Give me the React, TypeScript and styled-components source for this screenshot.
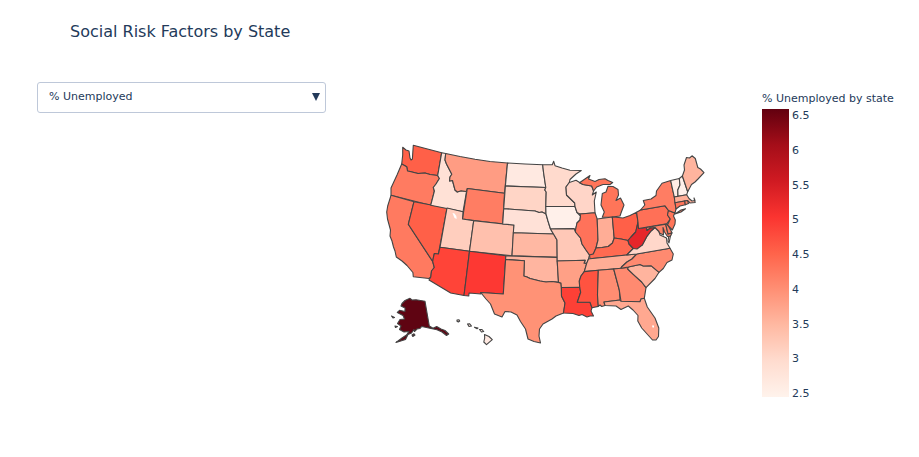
import React, { useState } from "react";
import styled, { createGlobalStyle } from "styled-components";

const GlobalStyle = createGlobalStyle`
  * { box-sizing: border-box; }
  body {
    margin: 0;
    background: #ffffff;
    color: #233a5a;
    font-family: Verdana, "DejaVu Sans", sans-serif;
  }
`;

const Page = styled.main`
  padding: 20px 26px 40px 37px;
`;

const Title = styled.h1`
  margin: 0 33px 38px;
  font-size: 16px;
  line-height: 24px;
  font-weight: 400;
`;

const Content = styled.div`
  display: grid;
  grid-template-columns: 289px minmax(0, 1fr) 131px;
  align-items: start;
`;

const Picker = styled.label`
  display: grid;
  align-items: center;
  height: 31px;
`;

const Select = styled.select`
  grid-area: 1 / 1;
  width: 100%;
  height: 31px;
  padding: 0 28px 2px 11px;
  appearance: none;
  border: 1px solid #bec8d9;
  border-radius: 3px;
  background: #ffffff;
  color: #233a5a;
  font: inherit;
  font-size: 11px;
`;

const Arrow = styled.svg`
  grid-area: 1 / 1;
  justify-self: end;
  width: 8px;
  height: 8px;
  margin: 0 6px 2px 0;
  pointer-events: none;
  fill: #233a5a;
`;

const MapArea = styled.div`
  display: flex;
  justify-content: center;
  padding-top: 58px;
`;

const MapSvg = styled.svg`
  width: 100%;
  max-width: 330px;
  height: auto;
  stroke: #444444;
  stroke-width: 1.1;
  stroke-linejoin: round;
`;

const Legend = styled.section`
  padding-top: 8px;
`;

const LegendTitle = styled.h2`
  margin: 0;
  font-size: 11px;
  line-height: 18px;
  font-weight: 400;
  white-space: nowrap;
`;

const Scale = styled.div`
  display: flex;
  align-items: start;
  gap: 3px;
  padding-top: 1px;
`;

const Bar = styled.div`
  width: 27px;
  height: 288px;
  background: linear-gradient(
    to top,
    #fff3ec, #ffdccf, #ffb9a2, #ff8f74, #ff634a, #fb3430, #d01a22, #a50e19, #62000f
  );
`;

const Ticks = styled.ol`
  display: flex;
  flex-direction: column;
  justify-content: space-between;
  height: 292px;
  margin: 0;
  padding: 0;
  list-style: none;
  font-size: 11px;
  line-height: 14px;
`;

type Shape = { id: string; fill: string; d: string };

const STATES: Shape[] = [
  { id: "WA", fill: "#ff6048", d: "M402.7 147.3L406 150 409 151 410 158 411 160 412.4 159 412.7 154 413.3 145.3 441.7 152.7 437.7 175.5 430 174.5 425 173 418 173.5 410 171.5 407.5 171 406.7 166.7 401.7 164 402.7 155Z" },
  { id: "OR", fill: "#ff7b61", d: "M401.7 164L406.7 166.7 407.5 171 410 171.5 418 173.5 425 173 430 174.5 437.7 175.5 439.4 178.5 436 184 433.3 187.5 434.4 191 430.7 205.3 391 195.3 391 188 397 175Z" },
  { id: "CA", fill: "#ff7a60", d: "M391 195.3L414 201.7 408.3 224.3 432.7 261.5 434.3 267.5 431.5 271 430.8 277 429 278.5 413.3 276.7 412.9 272.5 407 265.5 402 261 396.3 257 395 251 393.5 247 392 241 390 236 390.5 230 387.5 219 386.7 212 387.7 206Z" },
  { id: "NV", fill: "#ff6048", d: "M414 201.7L447 208 438.4 254 434.4 253.5 433.5 257 432.7 261.5 408.3 224.3Z" },
  { id: "ID", fill: "#ffe1d6", d: "M441.7 152.7L445.7 153.5 445 160 446.5 164 451.8 174.3 450 177 449.5 181 452.5 180.5 455 190 457.3 192 461 190.8 466.5 191.5 463 211.8 430.7 205.3 434.4 191 433.3 187.5 436 184 439.4 178.5 437.7 175.5Z" },
  { id: "MT", fill: "#ff9c83", d: "M445.7 153.5L460 156.5 475 159.3 490 161.5 507.5 163 504.5 193.2 467.3 188.5 466.5 191.5 461 190.8 457.3 192 455 190 452.5 180.5 449.5 181 450 177 451.8 174.3 446.5 164 445 160Z" },
  { id: "WY", fill: "#ff7d63", d: "M467.3 188.5L504.5 193.2 502.7 224 462.5 219Z" },
  { id: "UT", fill: "#ffcebe", d: "M447 208L463 211.8 462.5 219 473.7 220.7 469.5 251.3 440 247.3Z" },
  { id: "CO", fill: "#ffc0ad", d: "M473.7 220.7L514 225 512 255.8 469.5 251.3Z" },
  { id: "AZ", fill: "#ff4438", d: "M440 247.3L469.5 251.3 464 295.5 450.7 293 429 280 430.8 277 431.5 271 434.3 267.5 432.7 261.5 433.5 257 434.4 253.5 438.4 254Z" },
  { id: "NM", fill: "#fd3833", d: "M469.5 251.3L505.8 255.8 503.3 294 480.7 292.5 481 294 469 293 468.8 296 464 295.5Z" },
  { id: "ND", fill: "#ffe9e1", d: "M507.5 163L525 164 542.7 164.7 543.5 172 545.8 187.5 505.4 186Z" },
  { id: "SD", fill: "#ffd5c6", d: "M505.4 186L545.8 187.5 544.8 190 546.2 192 545.8 206.5 546 214 542 212 539 212.5 535 211 503.7 208.7Z" },
  { id: "NE", fill: "#ffe1d7", d: "M503.7 208.7L535 211 539 212.5 542 212 546 214 548 221 550.5 229 553.5 234 513.3 232.8 514 225 502.7 224Z" },
  { id: "KS", fill: "#ffb8a3", d: "M513.3 232.8L553.5 234 555 236.5 557 240 557.2 257.4 512 255.8Z" },
  { id: "OK", fill: "#ffb5a0", d: "M505.8 255.8L557.2 257.4 557.2 261 558.5 282.4 552 281.5 546 282 540 281 536 280 530 278.5 527 277 523.8 276 524.4 260.8 505.6 259.5Z" },
  { id: "TX", fill: "#ff9276", d: "M505.6 259.5L524.4 260.8 523.8 276 527 277 530 278.5 536 280 540 281 546 282 552 281.5 558.5 282.4 561 283 561.4 287.5 561.5 296 565 303 563.5 313 556 316 552 319 543 324 539.5 329 539 336 540.5 343 534 341.5 528 339 525.5 329 520.5 321.5 517 315 511 312 505 311.5 502 317 494.5 314 490.5 304 486 299 480.7 292.5 503.3 294Z" },
  { id: "MN", fill: "#ffdacd", d: "M542.7 164.7L552.3 164.8 553.7 161.3 555 165.7 562 168 570 170.3 581.3 170.5 576 174 570 179.5 569.3 182.5 566 187 566.5 195 574.7 203 575 206.5 545.8 206.5 546.2 192 544.8 190 545.8 187.5 543.5 172Z" },
  { id: "IA", fill: "#fff0ea", d: "M545.8 206.5L575 206.5 577 212.5 580.5 216 580 220 577 223 575.5 230 574 228.6 550.5 229 548 221 546 214Z" },
  { id: "MO", fill: "#ffc8b7", d: "M550.5 229L574 228.6 575.5 232 580.5 238 582 244 586 250 589.5 255 588.5 259 586.7 263.4 584 263.2 585.2 260.3 557.2 261 557 240 555 236.5 553.5 234Z" },
  { id: "AR", fill: "#ffa086", d: "M557.2 261L585.2 260.3 584 263.2 586.7 263.4 584.3 271.6 581 276 579.3 281 579.7 287.2 561.4 287.5 561 283 558.5 282.4Z" },
  { id: "LA", fill: "#fd4036", d: "M561.4 287.5L579.7 287.2 580.7 292.3 577.3 302.3 590 302.2 592 307.7 591 311 593.5 316 590 316 587 317 582 314.5 579 315.5 573 313.5 563.5 313 565 303 561.5 296Z" },
  { id: "WI", fill: "#ffd5c8", d: "M569.3 182.5L576 180.3 580 182.7 583 184.5 591.7 186 593.6 191 592.3 195 596.3 192 594.3 201 595 212.7 580 214 577 212.5 575 206.5 574.7 203 566.5 195 566 187Z" },
  { id: "IL", fill: "#ff725a", d: "M580 214L595 212.7 597.2 219 598 240 596 248 593.3 254 589.5 255 586 250 582 244 580.5 238 575.5 232 575.5 230 577 223 580 220 580.5 216Z" },
  { id: "MIU", fill: "#ff7559", d: "M579.5 182.7L590 175.5 588.5 179 595 181.5 599 179.5 605 178.8 608 180.5 612.7 182.5 610 184.5 603 184.5 596.7 187 593.6 191 591.7 186 583 184.5Z" },
  { id: "MI", fill: "#ff7559", d: "M602.3 217.3L604.3 212 601 205 602.3 193.5 606 192 608 186.3 613 186.5 618 189.5 618.5 195 616 200.5 620.5 198 624 205 621 213 620 216 612.3 217Z" },
  { id: "IN", fill: "#ffad96", d: "M597.2 219L612.3 217 614.2 238 612.5 243 608.3 246.5 602 247.5 596 248 598 240Z" },
  { id: "OH", fill: "#ff6048", d: "M612.3 217L618.5 217.5 623 218 630 215.5 636.6 212.3 638 222 635.7 232 631 237 628 240.5 621 239 614.2 238Z" },
  { id: "KY", fill: "#ff6a51", d: "M614.2 238L621 239 628 240.5 629 244 633.3 248.5 626.7 255 590 258.8 589.5 255 593.3 254 596 248 602 247.5 608.3 246.5 612.5 243Z" },
  { id: "TN", fill: "#ffad96", d: "M590 258.8L626.7 255 636.7 254 632 259 627 262 621.5 267 621 268.3 584.3 271.6 586.7 263.4 588.5 259Z" },
  { id: "MS", fill: "#ff5340", d: "M584.3 271.6L598.3 270.3 597.5 295 598.3 306.4 592 307.7 590 302.2 577.3 302.3 580.7 292.3 579.7 287.2 579.3 281 581 276Z" },
  { id: "AL", fill: "#ff8d72", d: "M598.3 270.3L613.7 269 619.3 290 620 300 604 302 605 305.5 601.7 306.5 600 305 598.3 306.4 597.5 295Z" },
  { id: "GA", fill: "#ff8a70", d: "M613.7 269L628 267.5 627.7 269 633.3 274.3 641.7 282 646 287.7 644.3 298.3 641 299 640 301.7 621 301.3 619.3 290Z" },
  { id: "FL", fill: "#ffa890", d: "M604 302L620 300 621 301.3 640 301.7 641 299 644.3 298.3 647.3 307 655 318 658.8 328 658.5 336.5 656 340 652.5 340 648 335 641.7 328 637.8 321 638 315.5 633 310 628.3 306 621 309.5 616 306 605 305.5Z" },
  { id: "SC", fill: "#ffb49e", d: "M627.7 269L628.3 267 640 264.5 643.3 266 651 265.7 659 272.3 655 278.5 646 287.7 641.7 282 633.3 274.3Z" },
  { id: "NC", fill: "#ff8a70", d: "M636.7 254L670 248.3 673.3 254 672 260 667 262.5 663.3 268.5 659 272.3 651 265.7 643.3 266 640 264.5 628.3 267 621 268.3 621.5 267 627 262 632 259Z" },
  { id: "VA", fill: "#ffd7ca", d: "M626.7 255L633.3 248.5 642.3 245 646.7 236.7 651 231 655 227.5 659 231.5 660 235 666.5 238 667 243 670 248.3 636.7 254Z" },
  { id: "VAE", fill: "#ffd7ca", d: "M670.7 235L669 243 668 241 668.7 236.5Z" },
  { id: "WV", fill: "#e6252a", d: "M638 222L638.5 228.5 646.5 227.5 647 230.5 650 228 655 227.5 651 231 646.7 236.7 642.3 245 637 249 633.3 248.5 629 244 628 240.5 631 237 635.7 232Z" },
  { id: "PA", fill: "#ff7057", d: "M636.6 212.3L640.5 210 665 205.8 668.5 210.5 667.5 215 670.3 219 666.7 223.8 638.5 228.5 638 222Z" },
  { id: "MD", fill: "#ff8267", d: "M646.5 227.5L665.7 224.2 668 234 672 233 670.5 236 667.5 236.5 664.5 232 663 227.5 663.5 235 659.5 233 659 231.5 655 227.5 650 228 647 230.5Z" },
  { id: "DE", fill: "#ff7d63", d: "M665.7 224.2L667.5 224 672 232.8 668 234Z" },
  { id: "NJ", fill: "#ff7559", d: "M668.5 210.5L674.8 213 673.5 216 675.3 220 675 224 672.3 230 667.5 225 670.3 219 667.5 215Z" },
  { id: "NY", fill: "#ff7d63", d: "M640.5 210L644.8 205 643.3 200.5 651 199 656 195.5 656.5 191 662 183.3 670.7 180.5 672.5 189 674.3 197 676 209 675 213 668.5 210.5 665 205.8Z" },
  { id: "NYL", fill: "#ff7d63", d: "M675 214L681 210 685.5 208.7 681 212Z" },
  { id: "VT", fill: "#ffece5", d: "M670.7 180.5L679.3 178.5 680 185 677.8 190 678 196.3 674.3 197 672.5 189Z" },
  { id: "NH", fill: "#fff0eb", d: "M679.3 178.5L682.4 176 687.7 191.7 686.7 194.7 678 196.3 677.8 190 680 185Z" },
  { id: "ME", fill: "#ffb49e", d: "M682.4 176L684.5 170 684 165 686.5 157.5 689.5 158 692 155.8 695.3 158.5 697.8 167.5 700.5 169 704 172.7 698 179 695 182 691.5 184.5 687.7 191.7Z" },
  { id: "MA", fill: "#ffae98", d: "M674.3 197L686.7 194.7 689 198.5 692 201 695 200.5 694 198 695.2 202.5 690 203 687.5 200.5 675 202.7Z" },
  { id: "CT", fill: "#ff745a", d: "M675 202.7L684.8 201 685.3 204.7 680 206 676 209Z" },
  { id: "RI", fill: "#ff8267", d: "M684.8 201L687.5 200.5 688.5 203.5 685.3 204.7Z" },
  { id: "AK", fill: "#5f0412", d: "M402 303.5L405 300.5 410 298.3 412 300 416 299.7 425 301.3 429.3 326 433 328.3 436.7 326.5 441 329 445 330.5 448.7 334 446.5 335.5 442 332 437 329.7 431 328.5 421.7 326.5 420 328.5 417 329 414.5 331.5 414 329.5 411.5 333 408 334.5 405.5 339.5 396 342.5 402 338 406.5 335 409 331.5 404 332 399.5 329.5 401 326 397.5 323.5 400 319.5 404.5 319 403 315.5 397.3 312.5 399.5 310.3 405 311.5 405 308 401 306Z" },
  { id: "AKK", fill: "#5f0412", d: "M412 335L414 333.8 415 335 412.8 336.5Z" },
  { id: "AKS", fill: "#5f0412", d: "M391.5 316L394.5 317.5 393 318Z" },
  { id: "AKN", fill: "#5f0412", d: "M395 326L397.5 326.5 395.5 327.5Z" },
  { id: "HIK", fill: "#ffe9e1", d: "M457 320L459 319.7 459.7 321 458.3 322 457 321.3Z" },
  { id: "HIO", fill: "#ffe9e1", d: "M467.5 324L469.5 323.7 471.5 326 469 326.5Z" },
  { id: "HIM", fill: "#ffe9e1", d: "M474.5 327.3L478 328 477 328.7Z" },
  { id: "HIU", fill: "#ffe9e1", d: "M479.5 329.5L482 329.5 483.7 331.5 481.5 332Z" },
  { id: "HI", fill: "#ffe9e1", d: "M484.5 334.5L489 336.5 492.3 339.7 486.5 344.7 483.8 342 484.7 338Z" },
];

const WATER = ["M452.5 213L454.5 213.5 456.3 216 456.7 219 454.5 218Z", "M652 325.5L654 325.5 654 327.5 652.5 327.5Z"];

const TICKS = ["6.5", "6", "5.5", "5", "4.5", "4", "3.5", "3", "2.5"];

export default function App() {
  const [factor, setFactor] = useState("% Unemployed");
  return (
    <>
      <GlobalStyle />
      <Page>
        <Title>Social Risk Factors by State</Title>
        <Content>
          <Picker>
            <Select aria-label="Risk factor" value={factor} onChange={(e) => setFactor(e.target.value)}>
              <option>% Unemployed</option>
            </Select>
            <Arrow viewBox="0 0 8 8" aria-hidden="true">
              <path d="M0 0H8L4 8Z" />
            </Arrow>
          </Picker>
          <MapArea>
            <MapSvg viewBox="379 140 330 210" role="img" aria-label="Map of the United States">
              {STATES.map((s) => (
                <path key={s.id} d={s.d} fill={s.fill} />
              ))}
              {WATER.map((d) => (
                <path key={d} d={d} fill="#ffffff" stroke="none" />
              ))}
            </MapSvg>
          </MapArea>
          <Legend>
            <LegendTitle>{factor} by state</LegendTitle>
            <Scale>
              <Bar />
              <Ticks>
                {TICKS.map((t) => (
                  <li key={t}>{t}</li>
                ))}
              </Ticks>
            </Scale>
          </Legend>
        </Content>
      </Page>
    </>
  );
}
